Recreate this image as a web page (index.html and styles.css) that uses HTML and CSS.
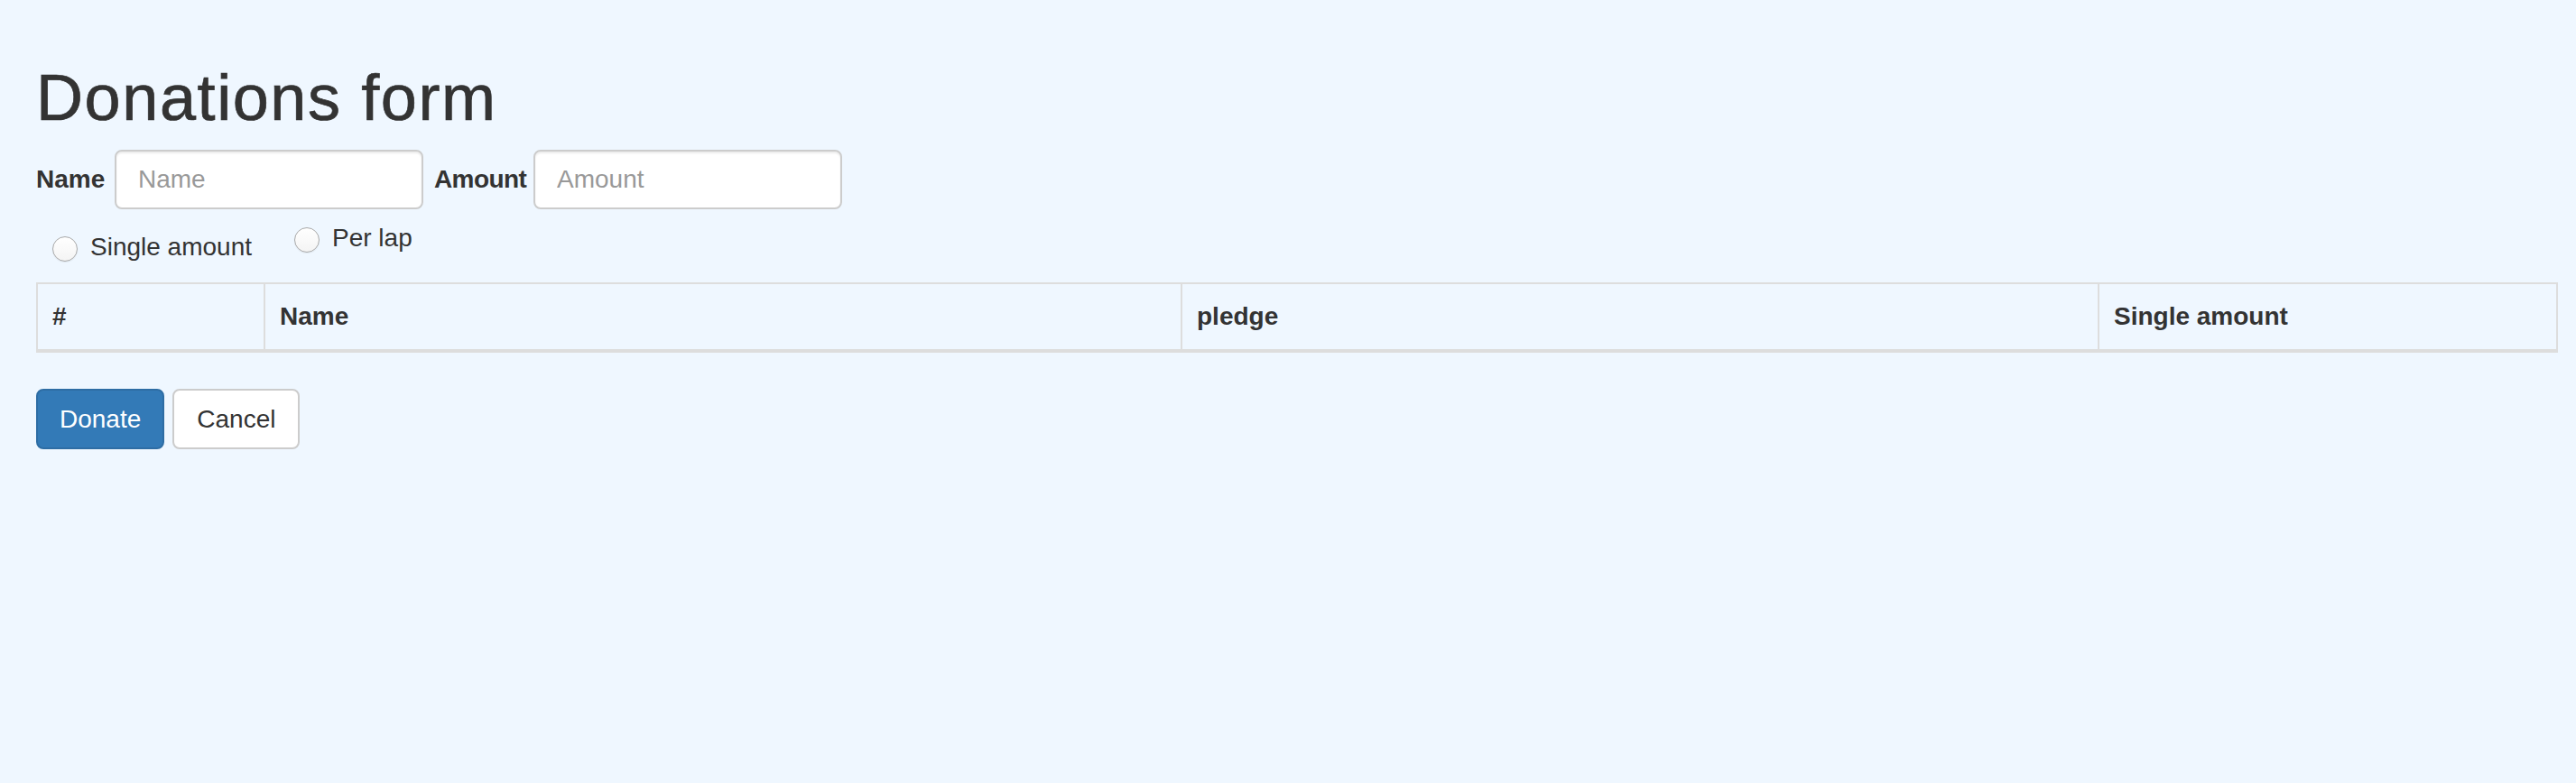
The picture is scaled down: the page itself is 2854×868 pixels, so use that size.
FILE: index.html
```html
<!DOCTYPE html>
<html lang="en">
<head>
<meta charset="utf-8">
<title>Donations form</title>
<link rel="stylesheet" href="styles.css">
</head>
<body>
<div class="page">
  <h1 class="title">Donations form</h1>
  <form class="donation-form">
    <div class="field-row">
      <label class="field-label label-name" for="name">Name</label>
      <input class="text-input input-name" id="name" type="text" placeholder="Name">
      <label class="field-label label-amount" for="amount">Amount</label>
      <input class="text-input" id="amount" type="text" placeholder="Amount">
    </div>
    <div class="radio-row">
      <label class="radio-option option-single">
        <input class="radio" type="radio" name="kind" value="single">
        <span>Single amount</span>
      </label>
      <label class="radio-option option-lap">
        <input class="radio" type="radio" name="kind" value="lap">
        <span>Per lap</span>
      </label>
    </div>
    <table class="pledges">
      <colgroup>
        <col class="col-num">
        <col class="col-name">
        <col class="col-pledge">
        <col class="col-single">
      </colgroup>
      <thead>
        <tr>
          <th>#</th>
          <th>Name</th>
          <th>pledge</th>
          <th>Single amount</th>
        </tr>
      </thead>
    </table>
    <div class="actions">
      <button class="btn btn-primary" type="submit">Donate</button>
      <button class="btn btn-default" type="button">Cancel</button>
    </div>
  </form>
</div>
</body>
</html>
```

FILE: styles.css
```css
* {
  box-sizing: border-box;
}

html, body {
  margin: 0;
  padding: 0;
}

body {
  background: #eff7ff;
  color: #333333;
  font-family: "Liberation Sans", Arial, Helvetica, sans-serif;
  font-size: 28px;
  line-height: 40px;
  min-height: 868px;
}

.page {
  padding: 0 20px 0 40px;
}

.title {
  margin: 69px 0 18px;
  font-size: 72px;
  line-height: 79px;
  font-weight: 500;
  letter-spacing: 1.6px;
  -webkit-text-stroke: 0.7px #333333;
  color: #333333;
}

.field-row {
  display: flex;
  align-items: center;
  height: 66px;
}

.field-label {
  font-weight: bold;
  white-space: nowrap;
  margin-right: 9px;
}

.label-name {
  width: 78px;
}

.label-amount {
  width: 101px;
  letter-spacing: -0.6px;
}

.text-input {
  width: 342px;
  height: 66px;
  padding: 0 24px;
  border: 2px solid #cccccc;
  border-radius: 8px;
  background: #ffffff;
  box-shadow: inset 0 2px 2px rgba(0, 0, 0, 0.075);
  font-family: inherit;
  font-size: 28px;
  color: #555555;
  outline: none;
}

.input-name {
  margin-right: 12px;
}

.text-input::placeholder {
  color: #999999;
  opacity: 1;
}

.radio-row {
  display: flex;
  align-items: flex-start;
  margin-top: 12px;
}

.radio-option {
  display: flex;
  align-items: center;
  height: 40px;
  gap: 14px;
  white-space: nowrap;
}

.option-single {
  margin-left: 18px;
  margin-top: 10px;
}

.option-lap {
  margin-left: 47px;
}

.radio {
  appearance: none;
  -webkit-appearance: none;
  width: 28px;
  height: 28px;
  margin: 4px 0 0;
  border: 1px solid #a8a8a8;
  border-radius: 50%;
  background: linear-gradient(#ffffff, #f4f4f4);
  box-shadow: 0 1px 1px rgba(0, 0, 0, 0.06);
  flex: none;
}

.pledges {
  width: 100%;
  margin-top: 19px;
  margin-bottom: 40px;
  border-collapse: collapse;
  table-layout: fixed;
  border: 2px solid #dddddd;
}

.col-num {
  width: 252px;
}

.col-name {
  width: 1016px;
}

.col-pledge {
  width: 1016px;
}

.pledges th {
  padding: 16px;
  text-align: left;
  font-weight: bold;
  line-height: 40px;
  border: 2px solid #dddddd;
  border-bottom: 4px solid #dddddd;
  vertical-align: bottom;
}

.actions {
  display: flex;
  gap: 9px;
}

.btn {
  height: 67px;
  padding: 0 24px;
  border: 2px solid transparent;
  border-radius: 8px;
  font-family: inherit;
  font-size: 28px;
  line-height: 40px;
  cursor: pointer;
}

.btn-primary {
  background: #337ab7;
  border-color: #2e6da4;
  color: #ffffff;
}

.btn-default {
  background: #ffffff;
  border-color: #cccccc;
  color: #333333;
  padding: 0 25px;
}
```
